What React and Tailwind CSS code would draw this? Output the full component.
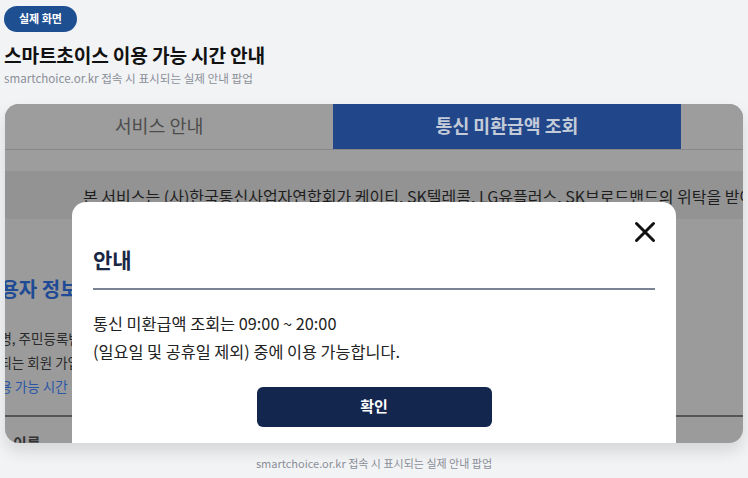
import React from "react";

export default function App() {
  const font = { fontFamily: '"Noto Sans CJK KR", "Noto Sans", sans-serif' };
  return (
    <div className="w-[748px] h-[478px] bg-[#f2f3f5] overflow-hidden relative" style={font}>
      <div className="px-[4px] pt-[4px]">
        <div className="inline-flex items-center justify-center w-[73px] h-[26px] rounded-full bg-[#1d4f91] text-white text-[11px] font-bold leading-none">
          실제 화면
        </div>
        <h1 className="mt-[10px] text-[19.2px] font-bold text-[#111] leading-[26px] tracking-[-0.2px]">
          스마트초이스 이용 가능 시간 안내
        </h1>
        <p className="mt-[2px] text-[11.6px] text-[#8a8f98] leading-[16px]">
          smartchoice.or.kr 접속 시 표시되는 실제 안내 팝업
        </p>
      </div>

      <div className="mx-[5px] mt-[18px] h-[339px] rounded-[14px] overflow-hidden relative bg-[#9b9b9b] shadow-[0_8px_16px_rgba(0,0,0,0.12)]">
        <div className="flex h-[46px] border-b border-[#878787] bg-[#9d9d9d]">
          <div className="w-[328px] flex items-center justify-center pr-[20px] text-[18.4px] text-[#4d4d4d]">
            서비스 안내
          </div>
          <div className="w-[348px] flex items-center justify-center bg-[#22468a] text-[18.3px] font-bold text-[#c3cbd9]">
            통신 미환급액 조회
          </div>
          <div className="flex-1" />
        </div>
        <div className="h-[21px] bg-[#9d9d9d]" />
        <div className="h-[48px] bg-[#939393] pl-[78px] pt-[13px] whitespace-nowrap text-[16px] text-[#1e1e1e] leading-[24px]">
          본 서비스는 (사)한국통신사업자연합회가 케이티, SK텔레콤, LG유플러스, SK브로드밴드의 위탁을 받아
        </div>
        <div className="pt-[55px] whitespace-nowrap">
          <div className="ml-[-23px] text-[20px] font-bold text-[#1f4a95] leading-[30px]">이용자 정보</div>
          <div className="mt-[22px] ml-[-18px] text-[13.5px] text-[#2a2a2a] leading-[24px]">성명, 주민등록번호</div>
          <div className="ml-[-18px] text-[13.5px] text-[#2a2a2a] leading-[24px]">가되는 회원 가입</div>
          <div className="ml-[-18px] text-[13.5px] text-[#2a56a8] leading-[24px]">이용 가능 시간</div>
          <div className="mt-[17px] h-[2px] bg-[#555]" />
          <div className="mt-[16px] ml-[8px] text-[15px] font-bold text-[#333] leading-[20px]">이름</div>
        </div>

        <div className="absolute left-[67px] top-[98px] w-[604px] h-[260px] bg-white rounded-t-[14px] px-[21px]">
          <button className="absolute right-[20px] top-[19px] w-[22px] h-[22px] flex items-center justify-center">
            <svg width="22" height="22" viewBox="0 0 22 22" fill="none">
              <path d="M2.5 2.5L19.5 19.5M19.5 2.5L2.5 19.5" stroke="#111" strokeWidth="3" strokeLinecap="round" />
            </svg>
          </button>
          <div className="pt-[42px] text-[21px] font-bold text-[#1a2744] leading-[30px]">안내</div>
          <div className="mt-[14px] h-[2px] bg-[#7b8494]" />
          <div className="mt-[19px] text-[16.3px] text-[#222] leading-[28px]">
            <div>통신 미환급액 조회는 09:00 ~ 20:00</div>
            <div>(일요일 및 공휴일 제외) 중에 이용 가능합니다.</div>
          </div>
          <div className="mt-[22px] flex justify-center">
            <div className="w-[235px] h-[40px] rounded-[6px] bg-[#13264d] flex items-center justify-center text-white text-[15px] font-bold">
              확인
            </div>
          </div>
        </div>
      </div>

      <p className="mt-[12px] text-center text-[11px] text-[#8a8f98] leading-[16px]">
        smartchoice.or.kr 접속 시 표시되는 실제 안내 팝업
      </p>
    </div>
  );
}
